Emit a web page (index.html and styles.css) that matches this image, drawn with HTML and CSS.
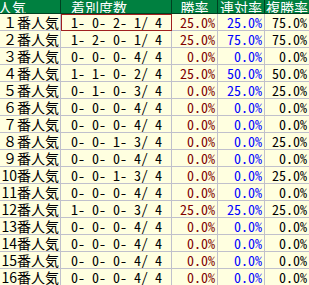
FILE: index.html
```html
<!DOCTYPE html>
<html lang="ja">
<head>
<meta charset="utf-8">
<link rel="stylesheet" href="styles.css">
</head>
<body>
<table class="stats">
  <colgroup>
    <col class="c-pop"><col class="c-rec"><col class="c-win"><col class="c-ren"><col class="c-fuku">
  </colgroup>
  <thead>
    <tr>
      <th class="h-pop"><span>人気</span></th>
      <th class="h-rec">着別度数</th>
      <th>勝率</th>
      <th>連対率</th>
      <th>複勝率</th>
    </tr>
  </thead>
  <tbody>
    <tr><td class="pop">１番人気</td><td class="rec sel">1- 0- 2- 1/ 4</td><td class="win">25.0%</td><td class="ren">25.0%</td><td class="fuku">75.0%</td></tr>
    <tr><td class="pop">２番人気</td><td class="rec">1- 2- 0- 1/ 4</td><td class="win">25.0%</td><td class="ren">75.0%</td><td class="fuku">75.0%</td></tr>
    <tr><td class="pop">３番人気</td><td class="rec">0- 0- 0- 4/ 4</td><td class="win">0.0%</td><td class="ren">0.0%</td><td class="fuku">0.0%</td></tr>
    <tr><td class="pop">４番人気</td><td class="rec">1- 1- 0- 2/ 4</td><td class="win">25.0%</td><td class="ren">50.0%</td><td class="fuku">50.0%</td></tr>
    <tr><td class="pop">５番人気</td><td class="rec">0- 1- 0- 3/ 4</td><td class="win">0.0%</td><td class="ren">25.0%</td><td class="fuku">25.0%</td></tr>
    <tr><td class="pop">６番人気</td><td class="rec">0- 0- 0- 4/ 4</td><td class="win">0.0%</td><td class="ren">0.0%</td><td class="fuku">0.0%</td></tr>
    <tr><td class="pop">７番人気</td><td class="rec">0- 0- 0- 4/ 4</td><td class="win">0.0%</td><td class="ren">0.0%</td><td class="fuku">0.0%</td></tr>
    <tr><td class="pop">８番人気</td><td class="rec">0- 0- 1- 3/ 4</td><td class="win">0.0%</td><td class="ren">0.0%</td><td class="fuku">25.0%</td></tr>
    <tr><td class="pop">９番人気</td><td class="rec">0- 0- 0- 4/ 4</td><td class="win">0.0%</td><td class="ren">0.0%</td><td class="fuku">0.0%</td></tr>
    <tr><td class="pop">10番人気</td><td class="rec">0- 0- 1- 3/ 4</td><td class="win">0.0%</td><td class="ren">0.0%</td><td class="fuku">25.0%</td></tr>
    <tr><td class="pop">11番人気</td><td class="rec">0- 0- 0- 4/ 4</td><td class="win">0.0%</td><td class="ren">0.0%</td><td class="fuku">0.0%</td></tr>
    <tr><td class="pop">12番人気</td><td class="rec">1- 0- 0- 3/ 4</td><td class="win">25.0%</td><td class="ren">25.0%</td><td class="fuku">25.0%</td></tr>
    <tr><td class="pop">13番人気</td><td class="rec">0- 0- 0- 4/ 4</td><td class="win">0.0%</td><td class="ren">0.0%</td><td class="fuku">0.0%</td></tr>
    <tr><td class="pop">14番人気</td><td class="rec">0- 0- 0- 4/ 4</td><td class="win">0.0%</td><td class="ren">0.0%</td><td class="fuku">0.0%</td></tr>
    <tr><td class="pop">15番人気</td><td class="rec">0- 0- 0- 4/ 4</td><td class="win">0.0%</td><td class="ren">0.0%</td><td class="fuku">0.0%</td></tr>
    <tr><td class="pop">16番人気</td><td class="rec">0- 0- 0- 4/ 4</td><td class="win">0.0%</td><td class="ren">0.0%</td><td class="fuku">0.0%</td></tr>
  </tbody>
</table>
</body>
</html>
```

FILE: styles.css
```css
html, body {
  margin: 0;
  padding: 0;
  background: #ffffff;
  overflow: hidden;
}

.stats {
  border-collapse: collapse;
  table-layout: fixed;
  width: 310px;
  margin: 0 0 0 -1px;
  font-family: "Noto Sans CJK JP", "Noto Sans", sans-serif;
  font-size: 14px;
  color: #000000;
}

.c-pop { width: 61px; }
.c-rec { width: 111px; }
.c-win { width: 46px; }
.c-ren { width: 47px; }
.c-fuku { width: 45px; }

.stats th {
  height: 13px;
  padding: 0;
  line-height: 12px;
  background: #008040;
  color: #ffffff;
  font-weight: normal;
  border: 1px solid #004020;
  border-top: none;
  text-align: center;
  white-space: nowrap;
  overflow: hidden;
  vertical-align: bottom;
}

.stats th.h-pop {
  text-align: left;
}

.h-pop span {
  display: inline-block;
  margin-left: -2px;
}

.stats th.h-rec {
  text-align: left;
  padding-left: 10px;
}

.stats td {
  height: 16px;
  padding: 0 2px 0 0;
  line-height: 16px;
  background: #ffffe0;
  border: 1px solid #c0c0cc;
  text-align: right;
  white-space: pre;
  overflow: hidden;
  font-feature-settings: "hwid";
}

.stats td.pop {
  text-align: right;
  padding-right: 1px;
  font-feature-settings: normal;
}

.stats td.rec {
  text-align: left;
  padding-left: 10px;
}

.stats td.sel {
  outline: 1px solid #a02020;
  outline-offset: -1px;
}

.win { color: #800000; }
.ren { color: #0000ff; }
.fuku { color: #000000; }
```
